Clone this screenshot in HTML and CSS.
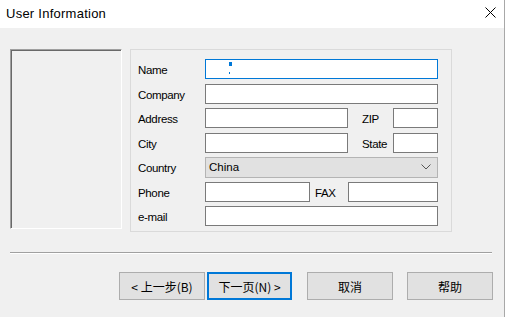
FILE: index.html
```html
<!DOCTYPE html>
<html lang="en">
<head>
  <meta charset="UTF-8" />
  <title>User Information</title>
  <link rel="stylesheet" href="styles.css">
</head>
<body>

  <div class="dialog">
    <div class="title-bar">
      <span class="title">User Information</span>
      <svg class="close" width="11" height="11" viewBox="0 0 11 11">
        <path d="M0.5 0.5 L10.5 10.5 M10.5 0.5 L0.5 10.5" stroke="#000" stroke-width="1" fill="none"/>
      </svg>
    </div>

    <div class="content">
      <div class="main-row">
        <div class="picture-box"></div>

        <div class="group-box">
          <div class="form-row">
            <label class="field-label">Name</label>
            <div class="text-box focused"><span class="caret"></span></div>
          </div>
          <div class="form-row">
            <label class="field-label">Company</label>
            <div class="text-box"></div>
          </div>
          <div class="form-row">
            <label class="field-label">Address</label>
            <div class="text-box address"></div>
            <label class="field-label zip-label">ZIP</label>
            <div class="text-box"></div>
          </div>
          <div class="form-row">
            <label class="field-label">City</label>
            <div class="text-box address"></div>
            <label class="field-label zip-label">State</label>
            <div class="text-box"></div>
          </div>
          <div class="form-row">
            <label class="field-label">Country</label>
            <div class="combo-box">
              <span>China</span>
              <svg width="10" height="6" viewBox="0 0 10 6">
                <path d="M0.5 0.5 L5 5 L9.5 0.5" stroke="#555" stroke-width="1" fill="none"/>
              </svg>
            </div>
          </div>
          <div class="form-row">
            <label class="field-label">Phone</label>
            <div class="text-box phone"></div>
            <label class="field-label fax-label">FAX</label>
            <div class="text-box"></div>
          </div>
          <div class="form-row">
            <label class="field-label">e-mail</label>
            <div class="text-box"></div>
          </div>
        </div>
      </div>

      <div class="separator"></div>

      <div class="button-row">
        <button class="btn">&lt; 上一步(B)</button>
        <button class="btn default">下一页(N) &gt;</button>
        <button class="btn spaced">取消</button>
        <button class="btn spaced">帮助</button>
      </div>
    </div>
  </div>

</body>
</html>
```

FILE: styles.css
```css
html, body {
  margin: 0;
  padding: 0;
}

body {
  background: #fff;
  width: 508px;
  height: 317px;
  overflow: hidden;
  font-family: "Liberation Sans", Arial, sans-serif;
}

.dialog {
  width: 504px;
  height: 317px;
  background: #f0f0f0;
  border-right: 1px solid #a8a8a8;
}

.title-bar {
  height: 28px;
  background: #fff;
  display: flex;
  align-items: center;
  justify-content: space-between;
  padding: 0 8px 0 6px;
}

.title {
  font-size: 13px;
  letter-spacing: 0.25px;
  color: #000;
  margin-top: -2px;
}

.close {
  margin-top: -3px;
}

.content {
  padding: 21px 0 0 10px;
}

.main-row {
  display: flex;
  align-items: flex-start;
  gap: 8px;
}

.picture-box {
  width: 110px;
  height: 178px;
  border: 1px solid;
  border-color: #a0a0a0 #fff #fff #a0a0a0;
  box-shadow: inset 1px 1px #696969;
}

.group-box {
  width: 300px;
  height: 172px;
  border: 1px solid #dadada;
  padding: 9px 13px 0 7px;
  display: flex;
  flex-direction: column;
  gap: 4.5px;
}

.form-row {
  display: flex;
  align-items: center;
  height: 20px;
}

.field-label {
  width: 67px;
  flex: none;
  font-size: 11.5px;
  letter-spacing: -0.35px;
  color: #000;
  padding-top: 2px;
}

.text-box {
  flex: 1;
  height: 18px;
  background: #fff;
  border: 1px solid #7a7a7a;
  position: relative;
}

.text-box.focused {
  border-color: #0078d7;
}

.caret {
  position: absolute;
  left: 23px;
  top: 2px;
  width: 3px;
  height: 4px;
  background: #0078d7;
  box-shadow: -1px 9px 0 -1px #0078d7;
}

.text-box.address {
  flex: none;
  width: 141px;
}

.zip-label {
  width: 31px;
  margin-left: 14px;
}

.text-box.phone {
  flex: none;
  width: 103px;
}

.fax-label {
  width: 33px;
  margin-left: 5px;
}

.combo-box {
  flex: 1;
  height: 19px;
  background: #e1e1e1;
  border: 1px solid #b4b4b4;
  display: flex;
  align-items: center;
  justify-content: space-between;
  padding: 0 6px 0 3px;
  font-size: 11.5px;
  color: #000;
}

.separator {
  width: 482px;
  height: 1px;
  background: #a0a0a0;
  margin-top: 20px;
  box-shadow: 0 1px #fff;
}

.button-row {
  display: flex;
  padding: 19px 0 0 109px;
}

.btn {
  width: 86px;
  height: 28px;
  background: #e1e1e1;
  border: 1px solid #adadad;
  font-family: "Noto Sans CJK SC", "Liberation Sans", sans-serif;
  font-size: 12px;
  color: #000;
  padding: 0;
}

.btn.default {
  width: 85px;
  border: 2px solid #0078d7;
  margin-left: 2px;
}

.btn.spaced {
  margin-left: 15px;
}

.btn.spaced:last-child {
  margin-left: 14px;
}
```
